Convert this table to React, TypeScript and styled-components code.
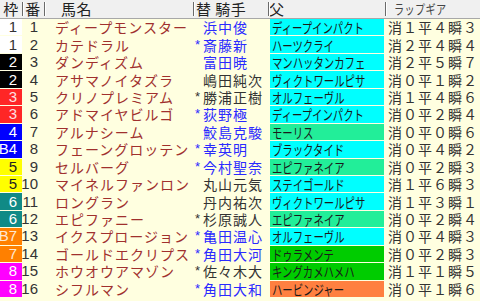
import React from "react";
import styled, { createGlobalStyle } from "styled-components";

const Global = createGlobalStyle`
  html, body { margin: 0; padding: 0; background: #ffffe0; }
  body { font-family: "Noto Sans CJK JP", "Noto Sans", sans-serif; }
`;

const COLS = "22px 22px 149px 75px 117px 95px";

const Table = styled.div`
  width: 480px;
  height: 301px;
  background: #ffffe0;
  display: flex;
  flex-direction: column;
  overflow: hidden;
`;

const Header = styled.div`
  display: grid;
  grid-template-columns: ${COLS};
  height: 18px;
  background: #f0f0f0;
  border-bottom: 1px solid #a8a8a8;
  box-sizing: content-box;
`;

const HeadCell = styled.div<{ $first?: boolean; $align?: string; $pl?: number; $narrow?: boolean }>`
  position: relative;
  height: 18px;
  display: flex;
  align-items: center;
  justify-content: ${(p) => p.$align || "flex-start"};
  padding-left: ${(p) => p.$pl ?? 0}px;
  font-size: ${(p) => (p.$narrow ? 13 : 15)}px;
  line-height: 18px;
  color: ${(p) => (p.$narrow ? "#444" : "#222")};
  white-space: nowrap;
  letter-spacing: 0.5px;
  &::before {
    content: "";
    display: ${(p) => (p.$first ? "none" : "block")};
    position: absolute;
    left: 0;
    top: 2px;
    bottom: 2px;
    width: 1px;
    background: #6a6a6a;
    box-shadow: 1px 0 0 #ffffff;
  }
`;

const Condensed = styled.span<{ $scale?: number }>`
  display: inline-block;
  transform: scaleX(${(p) => p.$scale ?? 0.74});
  transform-origin: left center;
  white-space: nowrap;
`;

const Body = styled.div`
  display: flex;
  flex-direction: column;
  gap: 1px;
  height: 278px;
`;

const Row = styled.div`
  flex: 1;
  display: grid;
  grid-template-columns: ${COLS};
  font-size: 14px;
  line-height: 16px;
`;

const FrameCell = styled.div<{ $bg: string; $fg: string }>`
  background: ${(p) => p.$bg};
  color: ${(p) => p.$fg};
  display: flex;
  align-items: center;
  justify-content: flex-end;
  padding-right: 5px;
  font-family: "Liberation Sans", "DejaVu Sans", sans-serif;
  font-size: 15px;
`;

const NumCell = styled.div`
  display: flex;
  align-items: center;
  justify-content: flex-end;
  padding-right: 6px;
  color: #333;
  font-family: "Liberation Sans", "DejaVu Sans", sans-serif;
  font-size: 15px;
`;

const NameCell = styled.div`
  display: flex;
  align-items: center;
  padding-left: 11px;
  color: #a0302e;
  letter-spacing: 1px;
  white-space: nowrap;
`;

const JockeyCell = styled.div<{ $blue: boolean }>`
  display: flex;
  align-items: center;
  padding-left: 2px;
  color: ${(p) => (p.$blue ? "#2a2aff" : "#333333")};
  letter-spacing: 1px;
  white-space: nowrap;
`;

const Mark = styled.span`
  width: 8px;
  flex: none;
  letter-spacing: 0;
  font-family: "Liberation Sans", sans-serif;
  font-size: 13px;
`;

const SireCell = styled.div<{ $bg: string }>`
  margin: 0 1px 0 2px;
  background: ${(p) => p.$bg};
  display: flex;
  align-items: center;
  padding-left: 2px;
  color: #1a1a1a;
  font-size: 14px;
  overflow: hidden;
`;

const LapCell = styled.div`
  display: flex;
  align-items: center;
  padding-left: 3px;
  color: #333;
  letter-spacing: 1px;
  white-space: nowrap;
`;

const FRAME: Record<number, [string, string]> = {
  1: ["#ffffff", "#333333"],
  2: ["#000000", "#ffffff"],
  3: ["#ff2626", "#ffe0e0"],
  4: ["#0000ff", "#ffffff"],
  5: ["#ffff00", "#222222"],
  6: ["#108a86", "#ffffff"],
  7: ["#ff8000", "#ffe8d0"],
  8: ["#ff00ff", "#ffffff"],
};

const CY = "#00ffff";
const MINT = "#22ee99";
const GRN = "#00cc00";
const ORG = "#ff8040";

type Horse = {
  frame: number;
  b?: boolean;
  no: number;
  name: string;
  mark: boolean;
  jockey: string;
  blue: boolean;
  sire: string;
  sireBg: string;
  lap: string;
};

const horses: Horse[] = [
  { frame: 1, no: 1, name: "ディープモンスター", mark: false, jockey: "浜中俊", blue: true, sire: "ディープインパクト", sireBg: CY, lap: "消１平４瞬３" },
  { frame: 1, no: 2, name: "カテドラル", mark: true, jockey: "斎藤新", blue: true, sire: "ハーツクライ", sireBg: CY, lap: "消２平４瞬４" },
  { frame: 2, no: 3, name: "ダンディズム", mark: false, jockey: "富田暁", blue: true, sire: "マンハッタンカフェ", sireBg: CY, lap: "消２平５瞬７" },
  { frame: 2, no: 4, name: "アサマノイタズラ", mark: false, jockey: "嶋田純次", blue: false, sire: "ヴィクトワールピサ", sireBg: CY, lap: "消０平１瞬２" },
  { frame: 3, no: 5, name: "クリノプレミアム", mark: true, jockey: "勝浦正樹", blue: false, sire: "オルフェーヴル", sireBg: CY, lap: "消１平４瞬６" },
  { frame: 3, no: 6, name: "アドマイヤビルゴ", mark: true, jockey: "荻野極", blue: true, sire: "ディープインパクト", sireBg: CY, lap: "消０平２瞬４" },
  { frame: 4, no: 7, name: "アルナシーム", mark: false, jockey: "鮫島克駿", blue: true, sire: "モーリス", sireBg: MINT, lap: "消０平０瞬６" },
  { frame: 4, b: true, no: 8, name: "フェーングロッテン", mark: true, jockey: "幸英明", blue: true, sire: "ブラックタイド", sireBg: CY, lap: "消０平４瞬２" },
  { frame: 5, no: 9, name: "セルバーグ", mark: true, jockey: "今村聖奈", blue: true, sire: "エピファネイア", sireBg: MINT, lap: "消０平２瞬３" },
  { frame: 5, no: 10, name: "マイネルファンロン", mark: false, jockey: "丸山元気", blue: false, sire: "ステイゴールド", sireBg: CY, lap: "消１平６瞬３" },
  { frame: 6, no: 11, name: "ロングラン", mark: false, jockey: "丹内祐次", blue: false, sire: "ヴィクトワールピサ", sireBg: CY, lap: "消１平３瞬１" },
  { frame: 6, no: 12, name: "エピファニー", mark: true, jockey: "杉原誠人", blue: false, sire: "エピファネイア", sireBg: MINT, lap: "消０平２瞬４" },
  { frame: 7, b: true, no: 13, name: "イクスプロージョン", mark: true, jockey: "亀田温心", blue: true, sire: "オルフェーヴル", sireBg: CY, lap: "消０平４瞬３" },
  { frame: 7, no: 14, name: "ゴールドエクリプス", mark: true, jockey: "角田大河", blue: true, sire: "ドゥラメンテ", sireBg: GRN, lap: "消０平２瞬３" },
  { frame: 8, no: 15, name: "ホウオウアマゾン", mark: true, jockey: "佐々木大", blue: false, sire: "キングカメハメハ", sireBg: GRN, lap: "消１平１瞬５" },
  { frame: 8, no: 16, name: "シフルマン", mark: true, jockey: "角田大和", blue: true, sire: "ハービンジャー", sireBg: ORG, lap: "消０平１瞬６" },
];

export default function App() {
  return (
    <>
      <Global />
      <Table>
        <Header>
          <HeadCell $first $align="center">枠</HeadCell>
          <HeadCell $align="center">番</HeadCell>
          <HeadCell $pl={17}>馬名</HeadCell>
          <HeadCell $pl={3}>替&nbsp;騎手</HeadCell>
          <HeadCell $pl={1}>父</HeadCell>
          <HeadCell $pl={9} $narrow>
            <Condensed $scale={0.78}>ラップギア</Condensed>
          </HeadCell>
        </Header>
        <Body>
          {horses.map((h) => {
            const [bg, fg] = FRAME[h.frame];
            return (
              <Row key={h.no}>
                <FrameCell $bg={bg} $fg={fg}>
                  {h.b ? "B" : ""}
                  {h.frame}
                </FrameCell>
                <NumCell>{h.no}</NumCell>
                <NameCell>{h.name}</NameCell>
                <JockeyCell $blue={h.blue}>
                  <Mark>{h.mark ? "*" : ""}</Mark>
                  {h.jockey}
                </JockeyCell>
                <SireCell $bg={h.sireBg}>
                  <Condensed>{h.sire}</Condensed>
                </SireCell>
                <LapCell>{h.lap}</LapCell>
              </Row>
            );
          })}
        </Body>
      </Table>
    </>
  );
}
